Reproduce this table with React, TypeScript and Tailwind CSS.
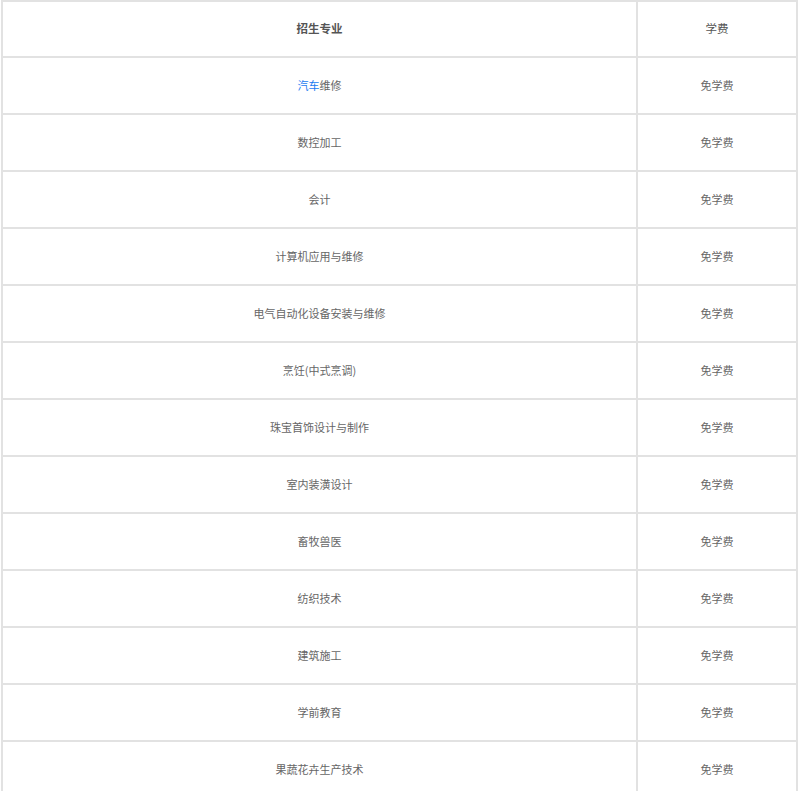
import React from "react";

const rows = [
  "汽车维修",
  "数控加工",
  "会计",
  "计算机应用与维修",
  "电气自动化设备安装与维修",
  "烹饪(中式烹调)",
  "珠宝首饰设计与制作",
  "室内装潢设计",
  "畜牧兽医",
  "纺织技术",
  "建筑施工",
  "学前教育",
  "果蔬花卉生产技术",
];

export default function App() {
  return (
    <div
      className="bg-white w-[800px] h-[791px] overflow-hidden pl-[1px]"
      style={{ fontFamily: '"Microsoft YaHei", "Noto Sans CJK SC", sans-serif' }}
    >
      <table className="border-collapse w-[797px] text-[11px] text-[#666]">
        <tbody>
          <tr className="h-[56px]">
            <td className="border-2 border-[#e2e2e2] text-center font-bold text-[11.5px] text-[#555] w-[635px]">招生专业</td>
            <td className="border-2 border-[#e2e2e2] text-center text-[11.5px] text-[#555]">学费</td>
          </tr>
          {rows.map((r, i) => (
            <tr key={i} className="h-[57px]">
              <td className="border-2 border-[#e2e2e2] text-center">
                {i === 0 ? (
                  <>
                    <span className="text-[#1a7cf0]">汽车</span>维修
                  </>
                ) : (
                  r
                )}
              </td>
              <td className="border-2 border-[#e2e2e2] text-center">免学费</td>
            </tr>
          ))}
        </tbody>
      </table>
    </div>
  );
}
